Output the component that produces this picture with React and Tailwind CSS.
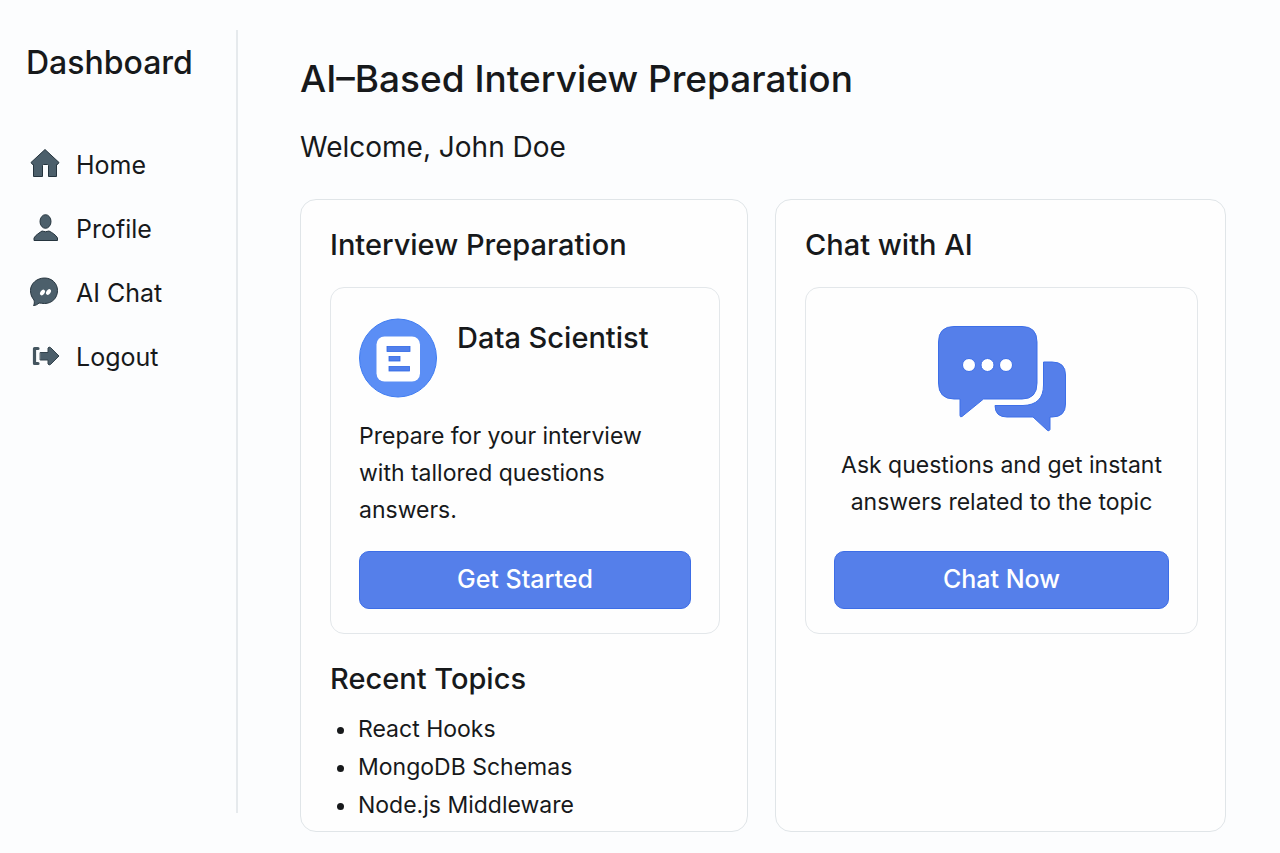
import React from "react";

function HomeIcon() {
  return (
    <svg viewBox="0 0 32 30" className="mb-1 h-[30px] w-8 shrink-0" fill="#4c5f6b" stroke="#25343e" strokeWidth="1" strokeLinejoin="round" aria-hidden="true">
      <path d="M16 .5 L30 13.500 L28.500 15.500 H27.500 V27.500 H19.500 V16.500 Q19.500 15.500 18.500 15.500 H14.500 Q13.500 15.500 13.500 16.500 V27.500 H4.500 V15.500 H3.500 L2 13.500 Z" />
    </svg>
  );
}

function ProfileIcon() {
  return (
    <svg viewBox="0 0 32 30" className="mb-1 h-[30px] w-8 shrink-0" fill="#4c5f6b" stroke="#25343e" strokeWidth="1" strokeLinejoin="round" aria-hidden="true">
      <ellipse cx="16.500" cy="8.500" rx="5.500" ry="6.800" />
      <path d="M5 27.500 V25 C6.500 22 11 19.500 13 18 Q16.500 19.500 20 18 C23 19.500 27 22 28.500 25 V27.500 Z" />
    </svg>
  );
}

function ChatIcon() {
  return (
    <svg viewBox="0 0 32 30" className="mb-1 h-[30px] w-8 shrink-0" aria-hidden="true">
      <path d="M15.500 1 C23 1 28.500 6.500 28.500 13.500 C28.500 21 23 26.500 15.500 26.500 C13.500 26.500 11.500 26 10 26 C8.500 27.500 6.500 28.500 4.500 28.500 C5.500 27 5.500 25 5 23 C3 20.500 1.500 18 1.500 13.500 C1.500 6.500 8 1 15.500 1 Z" fill="#4c5f6b" stroke="#25343e" strokeLinejoin="round" />
      <ellipse cx="13.500" cy="15.500" rx="2" ry="3.200" transform="rotate(35 13.500 15.500)" fill="#fff" />
      <ellipse cx="19.500" cy="15" rx="2" ry="3.200" transform="rotate(35 19.500 15)" fill="#fff" />
    </svg>
  );
}

function LogoutIcon() {
  return (
    <svg viewBox="0 0 32 30" className="mb-1 h-[30px] w-8 shrink-0" fill="#4c5f6b" strokeLinejoin="round" strokeLinecap="round" aria-hidden="true">
      <path d="M9 7.500 H5.500 V22.500 H9" fill="none" stroke="#44555f" strokeWidth="3.200" />
      <path d="M11.500 11.500 H19 V7 Q20 5.500 21.500 6.500 L30 15 L21.500 23.500 Q20 24.500 19 23 V19 H11.500 Z" stroke="#33434d" />
    </svg>
  );
}

function DocumentBadge() {
  return (
    <svg viewBox="0 0 78 80" className="h-20 w-[78px] shrink-0" aria-hidden="true">
      <ellipse cx="39" cy="40" rx="38.500" ry="39" fill="#5b8ef5" stroke="#3f7cf2" />
      <rect x="17.500" y="18.500" width="43.500" height="45" rx="8" fill="#fff" />
      <g fill="#5180ec" stroke="#2f66e6" strokeWidth="0.800">
        <rect x="28" y="28.500" width="23" height="5" />
        <rect x="30" y="38.500" width="11" height="4.500" />
        <rect x="30" y="48.500" width="20.500" height="4.500" />
      </g>
    </svg>
  );
}

function BubblesIcon() {
  return (
    <svg viewBox="0 0 128 107" className="h-[107px] w-32" fill="#557fea" stroke="#3d6fe8" strokeWidth="1" strokeLinejoin="round" aria-hidden="true">
      <path d="M16 .5 H84 Q99 .5 99 16 V57 Q99 73 84 73 H45.500 L24 90.500 Q22 91.500 22 89.500 V73 H16 Q.5 73 .5 57 V16 Q.5 .5 16 .5 Z" />
      <path d="M105.500 36 H114 Q127.500 36 127.500 49 V78 Q127.500 91 114 91 H112 V103.500 Q111 106 109 104 L95 91 H69 Q57 91 57 79.500 H85 Q105.500 79 105.500 59 Z" />
      <g fill="#fff">
        <circle cx="31" cy="39" r="6.500" />
        <circle cx="49.500" cy="39" r="6.500" />
        <circle cx="68" cy="39" r="6.500" />
      </g>
    </svg>
  );
}

const navItems = [
  { label: "Home", Icon: HomeIcon },
  { label: "Profile", Icon: ProfileIcon },
  { label: "AI Chat", Icon: ChatIcon },
  { label: "Logout", Icon: LogoutIcon },
];

const topics = ["React Hooks", "MongoDB Schemas", "Node.js Middleware"];

function ActionButton({ children }) {
  return (
    <button type="button" className="h-[58px] w-full rounded-[10px] border border-[#3d6de6] bg-[#557fea] text-[25px] font-medium text-white">
      {children}
    </button>
  );
}

function Panel({ title, children }) {
  return (
    <section className="rounded-2xl border border-[#e0e5e8] bg-[#fefefe] pt-[25px] pr-[27px] pb-[7px] pl-[29px]">
      <h2 className="mb-[22px] text-[29px] leading-10 font-medium">{title}</h2>
      {children}
    </section>
  );
}

export default function App() {
  return (
    <div className="flex min-h-screen bg-[#fcfdfe] font-['Inter','Liberation_Sans',sans-serif] text-[#17191b]">
      <aside className="my-[30px] mb-10 w-[238px] shrink-0 border-r-2 border-[#e6eaed] pl-[26px]">
        <div className="pt-3 text-[32px] leading-[42px] font-medium">Dashboard</div>
        <nav className="mt-[50px] pl-[3px]">
          <ul>
            {navItems.map(({ label, Icon }) => (
              <li key={label}>
                <a href="#" className="flex h-16 items-center gap-[15px] text-[25px]">
                  <Icon />
                  {label}
                </a>
              </li>
            ))}
          </ul>
        </nav>
      </aside>

      <main className="min-w-0 flex-1 pt-[55px] pr-[54px] pb-5 pl-[62px]">
        <h1 className="text-[37px] leading-[48px] font-medium">AI–Based Interview Preparation</h1>
        <p className="mt-6 text-[28px] leading-10">Welcome, John Doe</p>

        <div className="mt-8 grid grid-cols-[448fr_451fr] gap-[27px]">
          <Panel title="Interview Preparation">
            <div className="rounded-[14px] border border-[#e3e7ea] px-7 pt-[30px] pb-6">
              <div className="flex gap-5">
                <DocumentBadge />
                <h3 className="text-[29px] leading-10 font-medium">Data Scientist</h3>
              </div>
              <p className="mt-5 mb-[22px] max-w-[290px] text-[23px] leading-[37px]">
                Prepare for your interview with tallored questions answers.
              </p>
              <ActionButton>Get Started</ActionButton>
            </div>
            <h2 className="mt-[25px] text-[29px] leading-10 font-medium">Recent Topics</h2>
            <ul className="mt-[11px] list-disc pl-7 text-[23px] leading-[38px]">
              {topics.map((topic) => (
                <li key={topic}>{topic}</li>
              ))}
            </ul>
          </Panel>

          <Panel title="Chat with AI">
            <div className="rounded-[14px] border border-[#e3e7ea] px-7 pt-[38px] pb-6">
              <div className="flex justify-center">
                <BubblesIcon />
              </div>
              <p className="mt-[14px] mb-[30px] text-center text-[23px] leading-[37px]">
                Ask questions and get instant
                <br />
                answers related to the topic
              </p>
              <ActionButton>Chat Now</ActionButton>
            </div>
          </Panel>
        </div>
      </main>
    </div>
  );
}
